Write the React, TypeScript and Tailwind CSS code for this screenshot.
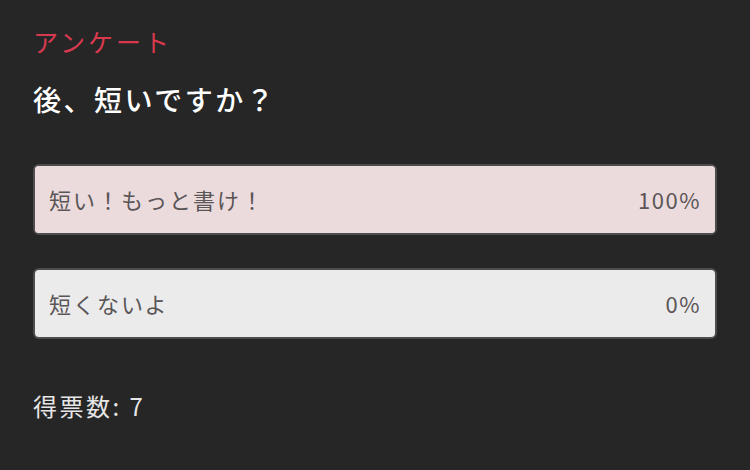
import React from "react";

const options = [
  { label: "短い！もっと書け！", percent: 100 },
  { label: "短くないよ", percent: 0 },
];

const App = () => {
  return (
    <div
      className="w-[750px] h-[470px] bg-[#262626] px-[33px] pt-[24px] overflow-hidden"
      style={{ fontFamily: '"Noto Sans CJK JP", "Noto Sans", sans-serif' }}
    >
      <div className="text-[25px] leading-[34px] tracking-[3px] text-[#d9394e]">アンケート</div>
      <div className="mt-[22px] text-[28px] leading-[38px] tracking-[2.5px] text-white font-medium">
        後、短いですか？
      </div>

      <div className="mt-[46px] flex flex-col gap-[33px]">
        {options.map((o) => (
          <div
            key={o.label}
            className="relative h-[71px] rounded-[6px] border-2 border-[#4e4c4d] bg-[#ebebeb] overflow-hidden"
          >
            <div
              className="absolute inset-y-0 left-0 bg-[#ecdbdc]"
              style={{ width: `${o.percent}%` }}
            />
            <div className="relative h-full flex items-center justify-between px-[14px] text-[22px] tracking-[2px] text-[#5a5557]">
              <span>{o.label}</span>
              <span className="tracking-[1.5px]">{o.percent}%</span>
            </div>
          </div>
        ))}
      </div>

      <div className="mt-[49px] text-[24px] tracking-[2.5px] text-[#e6e6e6]">得票数: 7</div>
    </div>
  );
};

export default App;
